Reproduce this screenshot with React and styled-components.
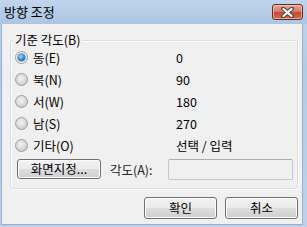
import React from "react";
import styled, { createGlobalStyle } from "styled-components";

const Global = createGlobalStyle`
  html, body { margin: 0; padding: 0; }
  body {
    width: 307px;
    height: 227px;
    overflow: hidden;
    font-family: "Noto Sans CJK KR", "Noto Sans", sans-serif;
    font-size: 12.5px;
    color: #000;
  }
`;

const Window = styled.div`
  width: 307px;
  height: 227px;
  box-sizing: border-box;
  display: flex;
  flex-direction: column;
  background: linear-gradient(#c3d6ec, #b4cbe6 30%, #bdd2ea);
`;

const TitleBar = styled.div`
  height: 24px;
  flex: none;
  display: flex;
  align-items: flex-start;
  padding: 0 4px 0 4px;
  box-sizing: border-box;
  background: linear-gradient(#c1d5ec, #abc5e3);
`;

const Title = styled.div`
  flex: 1;
  line-height: 24px;
  font-size: 13px;
`;

const CloseBtn = styled.div`
  margin-top: 4px;
  width: 31px;
  height: 16px;
  box-sizing: border-box;
  border: 1px solid #6b2a24;
  border-radius: 3px;
  background: linear-gradient(#eba898, #d97a69 45%, #c8472f 55%, #d56a50);
  box-shadow: inset 0 0 0 1px rgba(255, 220, 210, 0.55);
  display: flex;
  align-items: center;
  justify-content: center;
`;

const Client = styled.div`
  flex: 1;
  margin: 0 4px 2px 1px;
  border: 1px solid #98afc9;
  border-top: none;
  background: #f0f0f0;
  padding: 16px 4px 0 8px;
  display: flex;
  flex-direction: column;
`;

const Group = styled.div`
  position: relative;
  height: 149px;
  box-sizing: border-box;
  border: 1px solid #d5dfe5;
  border-radius: 3px;
  box-shadow: inset 1px 1px 0 #fff, 1px 1px 0 #fff;
  padding: 5px 3px 0 4px;
`;

const Legend = styled.div`
  position: absolute;
  left: 2px;
  top: -9px;
  padding: 0 2px;
  background: #f0f0f0;
  line-height: 16px;
`;

const Row = styled.div`
  display: grid;
  grid-template-columns: 161px 1fr;
  height: 22px;
  align-items: center;
`;

const RadioLabel = styled.div`
  display: flex;
  align-items: center;
  gap: 5px;
`;

const Radio = styled.span`
  width: 13px;
  height: 13px;
  box-sizing: border-box;
  border-radius: 50%;
  border: 1px solid #9c9e9f;
  background: ${(p) =>
    p.$checked
      ? "radial-gradient(circle at 50% 50%, #ffffff, #f4f4f4 60%, #dcdcdc)"
      : "radial-gradient(circle at 45% 40%, #f2f2f2, #dedede 45%, #c4c4c4 80%, #eeeeee)"};
  display: flex;
  align-items: center;
  justify-content: center;
  flex: none;
  &::after {
    content: "";
    display: ${(p) => (p.$checked ? "block" : "none")};
    width: 7px;
    height: 7px;
    border-radius: 50%;
    background: radial-gradient(circle at 40% 35%, #a8dcff, #2f8fd8 50%, #0d4f8e);
    box-shadow: 0 0 0 0.5px #1b4f7c;
  }
`;

const Value = styled.div`
  white-space: pre;
`;

const ControlRow = styled.div`
  display: flex;
  align-items: center;
  margin-top: 3px;
  height: 20px;
`;

const Button = styled.div`
  width: ${(p) => p.$w}px;
  height: ${(p) => p.$h}px;
  margin-left: ${(p) => p.$ml || 0}px;
  box-sizing: border-box;
  border: 1px solid #707070;
  border-radius: 3px;
  background: linear-gradient(#f2f2f2, #ebebeb 48%, #dddddd 52%, #cfcfcf);
  box-shadow: inset 0 0 0 1px #fcfcfc;
  display: flex;
  align-items: center;
  justify-content: center;
  flex: none;
  line-height: 1;
`;

const FieldLabel = styled.div`
  width: 58px;
  margin-left: 9px;
  color: #222;
`;

const Input = styled.div`
  width: 125px;
  height: 21px;
  box-sizing: border-box;
  border: 1px solid #c5c9cf;
  border-top-color: #abadb3;
  border-radius: 2px;
  background: #f0f0f0;
`;

const Footer = styled.div`
  display: flex;
  justify-content: flex-end;
  gap: 8px;
  margin-top: 8px;
`;

const options = [
  ["동(E)", "0", true],
  ["북(N)", "90"],
  ["서(W)", "180"],
  ["남(S)", "270"],
  ["기타(O)", "선택 / 입력"],
];

export default function App() {
  return (
    <>
      <Global />
      <Window>
        <TitleBar>
          <Title>방향 조정</Title>
          <CloseBtn>
            <svg width="13" height="11" viewBox="0 0 13 11">
              <path d="M2 1.5 L11 9.5 M11 1.5 L2 9.5" stroke="#4a4a4a" strokeWidth="4" strokeLinecap="round" />
              <path d="M2.5 2 L10.5 9 M10.5 2 L2.5 9" stroke="#ffffff" strokeWidth="2.2" strokeLinecap="round" />
            </svg>
          </CloseBtn>
        </TitleBar>
        <Client>
          <Group>
            <Legend>기준 각도(B)</Legend>
            {options.map(([label, value, checked]) => (
              <Row key={label}>
                <RadioLabel>
                  <Radio $checked={checked} />
                  <span>{label}</span>
                </RadioLabel>
                <Value>{value}</Value>
              </Row>
            ))}
            <ControlRow>
              <Button $w={84} $h={20} $ml={2}>화면지정...</Button>
              <FieldLabel>각도(A):</FieldLabel>
              <Input />
            </ControlRow>
          </Group>
          <Footer>
            <Button $w={73} $h={22}>확인</Button>
            <Button $w={73} $h={22}>취소</Button>
          </Footer>
        </Client>
      </Window>
    </>
  );
}
